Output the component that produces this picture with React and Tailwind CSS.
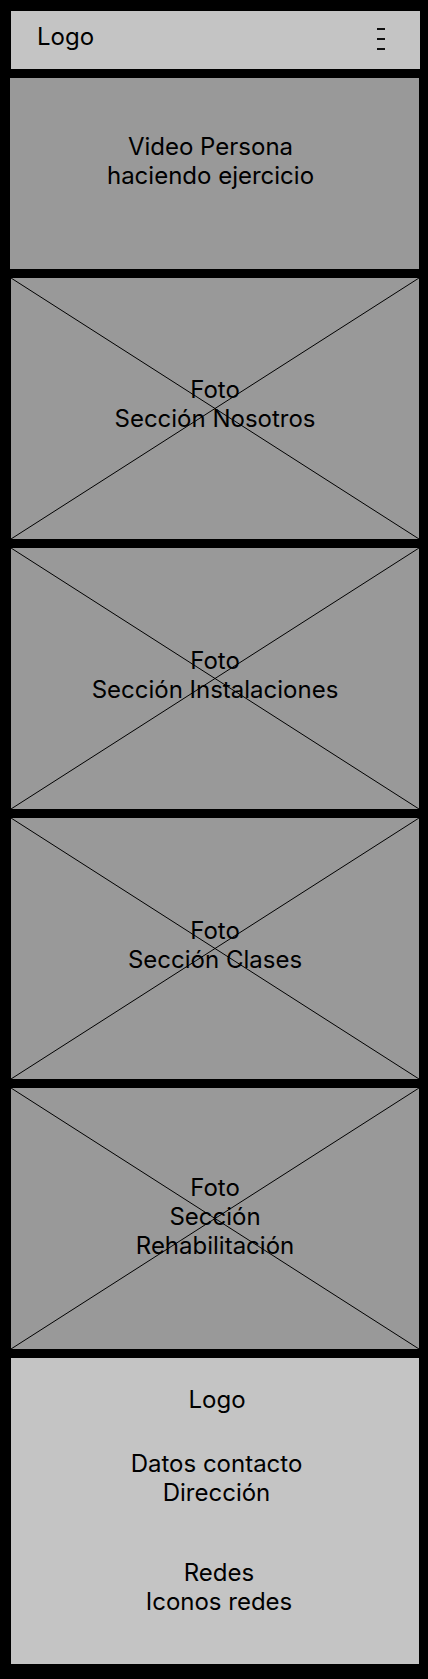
import React from "react";

function Cross() {
  return (
    <svg
      className="absolute inset-0 h-full w-full"
      viewBox="0 0 100 100"
      preserveAspectRatio="none"
    >
      <line x1="0" y1="0" x2="100" y2="100" stroke="#000" strokeWidth="1" vectorEffect="non-scaling-stroke" />
      <line x1="100" y1="0" x2="0" y2="100" stroke="#000" strokeWidth="1" vectorEffect="non-scaling-stroke" />
    </svg>
  );
}

function PhotoPanel({ lines, pb }) {
  return (
    <div className={`relative ml-[11px] flex h-[261px] w-[408px] items-center justify-center bg-[#999999] ${pb}`}>
      <Cross />
      <div className="relative text-center text-[24px] leading-[29px] text-black">
        {lines.map((l) => (
          <div key={l}>{l}</div>
        ))}
      </div>
    </div>
  );
}

export default function App() {
  return (
    <div
      className="flex min-h-[1679px] w-[428px] flex-col bg-black pt-[11px]"
      style={{ fontFamily: "Inter, 'Noto Sans', sans-serif" }}
    >
      <header className="ml-[11px] flex h-[58px] w-[409px] items-start justify-between bg-[#c4c4c4] pl-[26px] pr-[35px]">
        <div className="mt-[11px] text-[24px] leading-[29px] text-black">Logo</div>
        <div className="mt-[17px] flex flex-col gap-[8px]">
          <span className="block h-[2px] w-[8px] bg-[#111]" />
          <span className="block h-[2px] w-[8px] bg-[#111]" />
          <span className="block h-[2px] w-[8px] bg-[#111]" />
        </div>
      </header>

      <section className="ml-[10px] mt-[9px] h-[191px] w-[409px] bg-[#999999] pr-[8px] pt-[54px] text-center text-[24px] leading-[29px] text-black">
        <div>Video Persona</div>
        <div>haciendo ejercicio</div>
      </section>

      <div className="mt-[9px] flex flex-col gap-[9px]">
        <PhotoPanel lines={["Foto", "Sección Nosotros"]} pb="pb-[10px]" />
        <PhotoPanel lines={["Foto", "Sección Instalaciones"]} pb="pb-[8px]" />
        <PhotoPanel lines={["Foto", "Sección Clases"]} pb="pb-[8px]" />
        <PhotoPanel lines={["Foto", "Sección", "Rehabilitación"]} pb="pb-[5px]" />
      </div>

      <footer className="ml-[11px] mt-[9px] flex h-[306px] w-[408px] flex-col items-center bg-[#c4c4c4] pt-[27px] text-center text-[24px] leading-[29px] text-black">
        <div className="pl-[4px]">Logo</div>
        <div className="mt-[35px] pl-[3px]">
          <div>Datos contacto</div>
          <div>Dirección</div>
        </div>
        <div className="mt-[51px] pl-[8px]">
          <div>Redes</div>
          <div>Iconos redes</div>
        </div>
      </footer>
    </div>
  );
}
